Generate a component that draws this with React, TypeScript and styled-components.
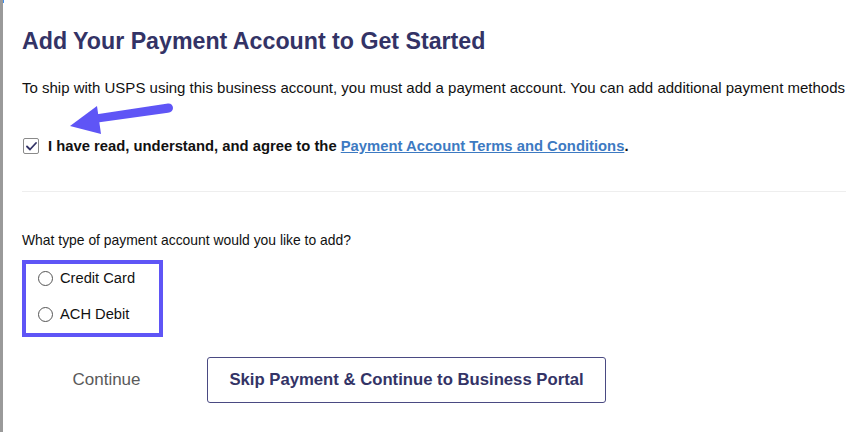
import React from 'react'
import styled, { createGlobalStyle } from 'styled-components'

const GlobalStyle = createGlobalStyle`
  html, body {
    margin: 0;
    padding: 0;
    background: #ffffff;
  }
  body {
    font-family: "Liberation Sans", Arial, Helvetica, sans-serif;
    color: #111111;
  }
`

const Page = styled.div`
  position: relative;
  width: 846px;
  height: 432px;
  box-sizing: border-box;
  border-left: 3px solid #9a9a9a;
  padding: 28px 0 0 19px;
  overflow: hidden;

  &::before {
    content: '';
    position: absolute;
    left: -3px;
    top: 0;
    width: 4px;
    height: 3px;
    background: #3d8ef0;
  }
`

const Title = styled.h1`
  margin: 0;
  font-size: 23.2px;
  line-height: 26px;
  font-weight: 700;
  color: #333366;
`

const Intro = styled.p`
  margin: 24px 0 0;
  font-size: 15px;
  line-height: 20px;
  white-space: nowrap;
`

const AgreeRow = styled.label`
  display: flex;
  align-items: center;
  gap: 9px;
  margin-top: 38px;
  height: 20px;
  font-size: 14.8px;
  font-weight: 700;
  white-space: nowrap;
`

const CheckBox = styled.span`
  display: inline-flex;
  align-items: center;
  justify-content: center;
  width: 16px;
  height: 16px;
  margin-left: 1px;
  box-sizing: border-box;
  border: 1px solid #8a8a8a;
  border-radius: 2px;
  background: #fff;
`

const TermsLink = styled.a`
  color: #3d7ac2;
  text-decoration: underline;
`

const Divider = styled.hr`
  margin: 35px 0 0;
  border: none;
  border-top: 1px solid #eeeeee;
`

const Question = styled.p`
  margin: 38px 0 0;
  font-size: 13.9px;
  line-height: 20px;
`

const OptionBox = styled.div`
  display: flex;
  flex-direction: column;
  gap: 16px;
  width: 141px;
  box-sizing: border-box;
  margin-top: 10px;
  padding: 4px 12px 9px 12px;
  border: 4px solid #5f55f6;
`

const OptionRow = styled.label`
  display: flex;
  align-items: center;
  gap: 7px;
  height: 20px;
  font-size: 14.7px;
`

const Radio = styled.span`
  width: 15px;
  height: 15px;
  box-sizing: border-box;
  border: 1px solid #555;
  border-radius: 50%;
  background: #fff;
`

const Actions = styled.div`
  display: flex;
  align-items: center;
  gap: 16px;
  margin-top: 20px;
`

const TextButton = styled.button`
  width: 169px;
  height: 46px;
  border: none;
  background: transparent;
  font-family: inherit;
  font-size: 17px;
  color: #5a5a5a;
  padding: 0;
`

const OutlineButton = styled.button`
  width: 399px;
  height: 46px;
  box-sizing: border-box;
  border: 1px solid #4a4a82;
  border-radius: 3px;
  background: #fff;
  font-family: inherit;
  font-size: 16.7px;
  font-weight: 700;
  color: #333366;
  padding: 0;
`

const Annotation = styled.svg`
  position: absolute;
  left: -3px;
  top: 0;
  pointer-events: none;
`

export default function App() {
  return (
    <>
      <GlobalStyle />
      <Page>
        <Title>Add Your Payment Account to Get Started</Title>
        <Intro>
          To ship with USPS using this business account, you must add a payment account. You can add additional payment methods
        </Intro>
        <AgreeRow>
          <CheckBox>
            <svg width="11" height="9" viewBox="0 0 11 9">
              <path d="M1 4.5 L4 7.5 L10 1" fill="none" stroke="#333366" strokeWidth="1.8" strokeLinecap="round" strokeLinejoin="round" />
            </svg>
          </CheckBox>
          <span>
            I have read, understand, and agree to the <TermsLink href="#">Payment Account Terms and Conditions</TermsLink>.
          </span>
        </AgreeRow>
        <Divider />
        <Question>What type of payment account would you like to add?</Question>
        <OptionBox>
          <OptionRow>
            <Radio />
            Credit Card
          </OptionRow>
          <OptionRow>
            <Radio />
            ACH Debit
          </OptionRow>
        </OptionBox>
        <Actions>
          <TextButton>Continue</TextButton>
          <OutlineButton>Skip Payment &amp; Continue to Business Portal</OutlineButton>
        </Actions>
        <Annotation width="200" height="150" viewBox="0 0 200 150">
          <path d="M168 103.5 C171 103.3 173 105.3 173 108 C173 110.7 171 112.5 168 112.7 L94 123 L92 115 Z" fill="#5f55f6" />
          <polygon points="70,126 97,106 101,134" fill="#5f55f6" />
        </Annotation>
      </Page>
    </>
  )
}
